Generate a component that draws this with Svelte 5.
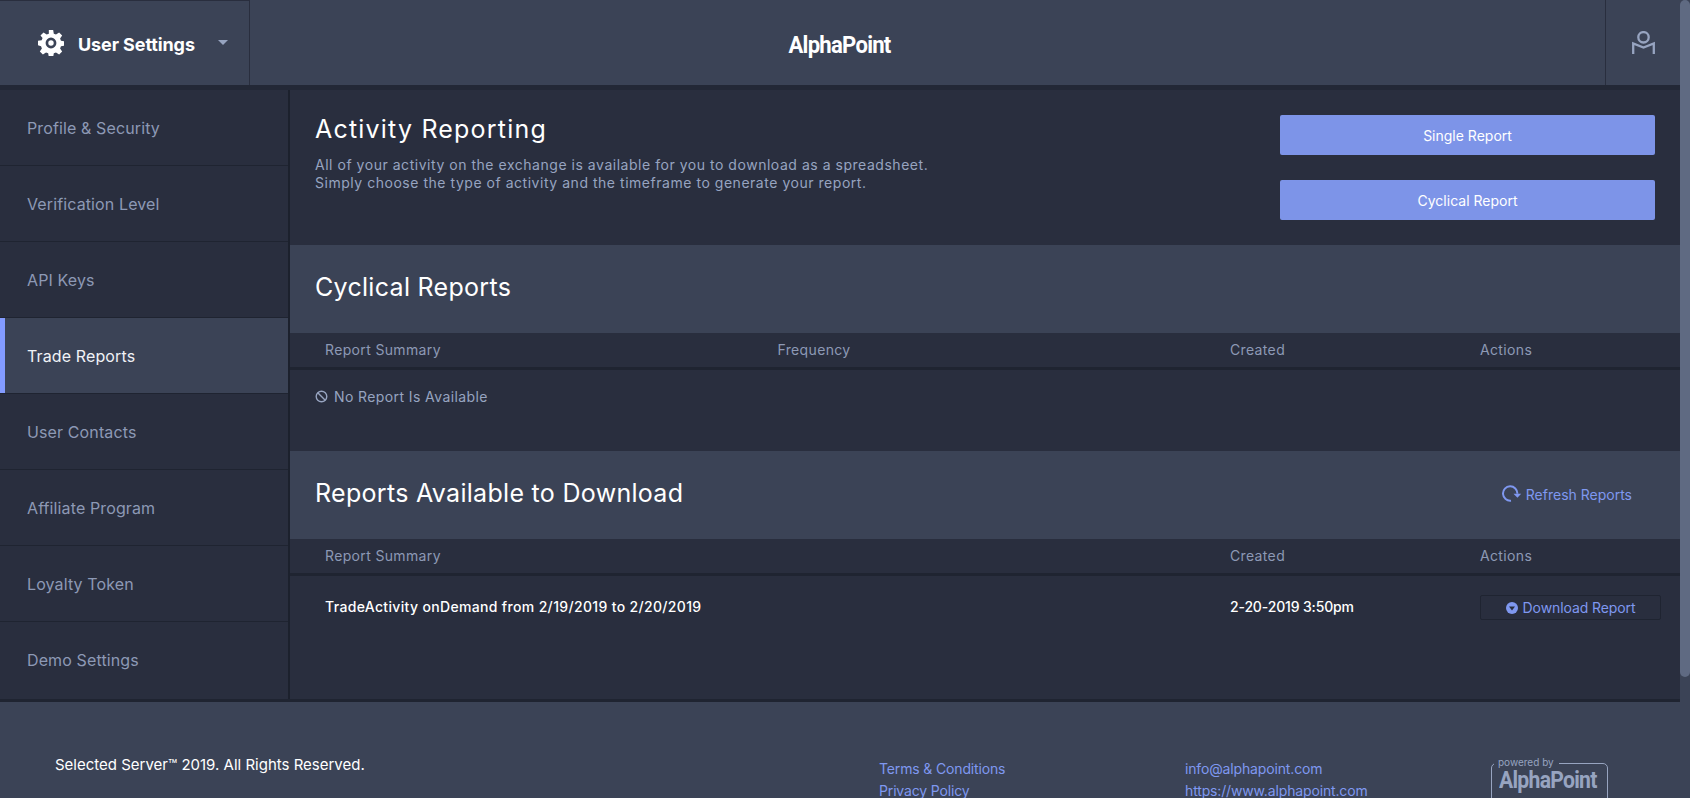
<script>
	const navItems = [
		'Profile & Security',
		'Verification Level',
		'API Keys',
		'Trade Reports',
		'User Contacts',
		'Affiliate Program',
		'Loyalty Token',
		'Demo Settings'
	];
	const activeItem = 'Trade Reports';
</script>

<div class="page">
	<header class="topbar">
		<div class="menu-toggle">
			<svg class="gear" viewBox="0 0 24 24" width="26" height="26">
				<path
					fill="#fff"
					fill-rule="evenodd"
					d="M10 0h4l.6 3.4 2 .8L19.500 2.300l2.800 2.800-1.900 2.800.8 2 3.400.6v3.900l-3.400.6-.8 2 1.900 2.800-2.800 2.800-2.900-1.900-2 .8-.6 3.400h-4l-.6-3.400-2-.8-2.900 1.900-2.800-2.800 1.900-2.800-.8-2L0 14V10l3.400-.6.800-2L2.300 5.100l2.800-2.800L8 4.200l2-.8zM12 7a5 5 0 1 0 0 10a5 5 0 0 0 0-10zM12 9.500a2.500 2.500 0 1 1 0 5a2.500 2.500 0 0 1 0-5z"
				/>
			</svg>
			<span class="menu-label">User Settings</span>
			<span class="caret"></span>
		</div>
		<div class="brand"><span class="logo">AlphaPoint</span></div>
		<div class="user-btn">
			<svg viewBox="0 0 23 23" width="23" height="23" fill="none" stroke="#97a4c0" stroke-width="2.300">
				<circle cx="11.500" cy="6.300" r="5.200" />
				<path d="M1.200 23V12.500l10.300 4 10.300-4V23" />
			</svg>
		</div>
	</header>

	<div class="body-row">
		<nav class="sidebar">
			{#each navItems as item}
				<div class="nav-item" class:active={item === activeItem}>{item}</div>
			{/each}
		</nav>

		<main class="content">
			<section class="intro">
				<div>
					<h1>Activity Reporting</h1>
					<p>All of your activity on the exchange is available for you to download as a spreadsheet.<br />Simply choose the type of activity and the timeframe to generate your report.</p>
				</div>
				<div class="intro-actions">
					<button class="primary">Single Report</button>
					<button class="primary">Cyclical Report</button>
				</div>
			</section>

			<section class="section-head">
				<h2>Cyclical Reports</h2>
			</section>
			<div class="table-head cyclical">
				<span>Report Summary</span>
				<span>Frequency</span>
				<span>Created</span>
				<span>Actions</span>
			</div>
			<div class="empty">
				<svg viewBox="0 0 14 14" width="13" height="13" fill="none" stroke="#97a4c0" stroke-width="1.500">
					<circle cx="7" cy="7" r="5.700" />
					<path d="M3 3l8 8" />
				</svg>
				No Report Is Available
			</div>

			<section class="section-head">
				<h2>Reports Available to Download</h2>
				<span class="refresh">
					<svg viewBox="0 0 20 18" width="20" height="18" fill="none" stroke="#7f98f0" stroke-width="2">
						<path d="M9 15.700A7.200 7.200 0 1 1 15.400 8.700" />
						<path fill="#7f98f0" stroke="none" d="M11.500 8.700h7.700l-3.800 4.100z" />
					</svg>
					Refresh Reports
				</span>
			</section>
			<div class="table-head available">
				<span>Report Summary</span>
				<span>Created</span>
				<span>Actions</span>
			</div>
			<div class="table-row available">
				<span>TradeActivity onDemand from 2/19/2019 to 2/20/2019</span>
				<span class="date">2-20-2019 3:50pm</span>
				<span>
					<button class="download">
						<svg viewBox="0 0 12 12" width="12" height="12">
							<circle cx="6" cy="6" r="6" fill="#7f98f0" />
							<path d="M3 4.500h6L6 8.500z" fill="#292e3e" />
						</svg>
						Download Report
					</button>
				</span>
			</div>
		</main>
	</div>

	<footer class="footer">
		<div class="copyright">Selected Server™ 2019. All Rights Reserved.</div>
		<div class="links">
			<span>Terms &amp; Conditions</span>
			<span>Privacy Policy</span>
		</div>
		<div class="links">
			<span>info@alphapoint.com</span>
			<span>https://www.alphapoint.com</span>
		</div>
		<div class="powered">
			<span class="powered-by">powered by</span>
			<span class="powered-logo">AlphaPoint</span>
		</div>
	</footer>

	<div class="scroll-thumb"></div>
</div>

<style>
	:global(html),
	:global(body) {
		margin: 0;
		height: 100%;
		overflow: hidden;
		background: #3b4356;
	}

	.page {
		position: relative;
		height: 798px;
		overflow: hidden;
		box-sizing: border-box;
		padding-right: 10px;
		background: #3b4356;
		font-family: Inter, "Liberation Sans", sans-serif;
		font-size: 14px;
		color: #fff;
	}

	.scroll-thumb {
		position: absolute;
		top: 0;
		right: 0;
		width: 10px;
		height: 677px;
		background: #5f6a82;
		border-radius: 5px;
	}

	.topbar {
		display: flex;
		height: 85px;
		background: #3b4356;
	}

	.menu-toggle {
		display: flex;
		align-items: center;
		width: 250px;
		flex-shrink: 0;
		box-sizing: border-box;
		padding-left: 38px;
		border-right: 1px solid #292e3e;
		border-top: 1px solid #292e3e;
	}

	.menu-label {
		margin: 2px 0 0 14px;
		font-size: 18px;
		font-weight: 700;
		letter-spacing: -0.1px;
	}

	.caret {
		margin: -2px 0 0 23px;
		border-left: 5px solid transparent;
		border-right: 5px solid transparent;
		border-top: 5px solid #97a4c0;
	}

	.brand {
		flex: 1;
		display: flex;
		align-items: center;
		justify-content: center;
	}

	.logo {
		display: inline-block;
		margin: 4px 176px 0 0;
		font-family: Roboto, sans-serif;
		font-size: 24px;
		font-weight: 700;
		letter-spacing: -0.8px;
		transform: scaleX(0.92);
	}

	.user-btn {
		width: 75px;
		flex-shrink: 0;
		display: flex;
		align-items: center;
		justify-content: center;
		border-left: 1px solid #292e3e;
		box-sizing: border-box;
	}

	.body-row {
		display: flex;
		border-top: 5px solid #232836;
		border-bottom: 3px solid #1f2431;
		background: #292e3e;
	}

	.sidebar {
		width: 288px;
		flex-shrink: 0;
		border-right: 2px solid #1c212d;
	}

	.nav-item {
		height: 75px;
		display: flex;
		align-items: center;
		padding-left: 27px;
		font-size: 16px;
		letter-spacing: 0.12px;
		color: #8d99b5;
		border-bottom: 1px solid #1f2431;
	}

	.nav-item:last-child {
		border-bottom: none;
		height: 76px;
	}

	.nav-item.active {
		color: #f0f2f6;
		background: #3b4356;
		box-shadow: inset 5px 0 0 #839bff;
	}

	.content {
		flex: 1;
		min-width: 0;
	}

	.intro {
		display: flex;
		justify-content: space-between;
		height: 155px;
		box-sizing: border-box;
		padding: 23px 25px 0;
	}

	h1,
	h2 {
		margin: 0;
		font-weight: 400;
		font-size: 25px;
		line-height: 32px;
	}

	h1 {
		letter-spacing: 1.2px;
	}

	h2 {
		letter-spacing: 0.3px;
	}

	.intro p {
		margin: 11px 0 0;
		font-size: 14px;
		line-height: 18px;
		letter-spacing: 0.53px;
		color: #97a4c0;
	}

	.intro-actions {
		display: flex;
		flex-direction: column;
		gap: 25px;
		margin-top: 2px;
	}

	.primary {
		width: 375px;
		height: 40px;
		border: none;
		border-radius: 2px;
		background: #7d94e8;
		color: #fff;
		font: inherit;
		font-size: 14px;
	}

	.section-head {
		display: flex;
		align-items: center;
		justify-content: space-between;
		height: 88px;
		padding: 0 25px;
		background: #3b4356;
	}

	.section-head h2 {
		margin-top: -4px;
	}

	.refresh {
		display: flex;
		align-items: center;
		gap: 4px;
		margin: -2px 23px 0 0;
		color: #7f98f0;
		font-size: 14px;
	}

	.table-head,
	.table-row {
		display: grid;
		padding-left: 35px;
		align-items: center;
	}

	.cyclical {
		grid-template-columns: 452.500px 452.500px 250px 1fr;
	}

	.available {
		grid-template-columns: 905px 250px 1fr;
	}

	.table-head {
		height: 32px;
		padding-bottom: 2px;
		color: #8d99b5;
		font-size: 14px;
		letter-spacing: 0.35px;
		border-bottom: 3px solid #1f2431;
		background: #292e3e;
	}

	.empty {
		height: 81px;
		box-sizing: border-box;
		display: flex;
		align-items: flex-start;
		gap: 6px;
		padding: 18px 25px 0;
		line-height: 17px;
		color: #97a4c0;
		letter-spacing: 0.4px;
	}

	.empty svg {
		margin-top: 2px;
	}

	.table-row {
		height: 123px;
		align-items: start;
		padding-top: 19px;
		box-sizing: border-box;
		font-weight: 500;
		line-height: 24px;
		letter-spacing: 0.34px;
	}

	.table-row .date {
		letter-spacing: -0.15px;
	}

	.download {
		display: flex;
		align-items: center;
		justify-content: center;
		gap: 5px;
		width: 181px;
		height: 25px;
		padding: 0;
		border: 1px solid #1f2431;
		border-radius: 2px;
		background: transparent;
		color: #7f98f0;
		font: inherit;
		font-weight: 400;
		font-size: 14px;
		letter-spacing: -0.1px;
	}

	.footer {
		display: grid;
		grid-template-columns: 824px 306px 306px 1fr;
		padding: 54px 0 0 55px;
		height: 96px;
	}

	.copyright {
		font-size: 15px;
		line-height: 18px;
	}

	.links {
		display: flex;
		flex-direction: column;
		gap: 5px;
		padding-top: 4px;
		color: #7f98f0;
		line-height: 17px;
		letter-spacing: -0.15px;
	}

	.powered {
		position: relative;
		width: 117px;
		height: 70px;
		box-sizing: border-box;
		margin-top: 7px;
		padding-left: 7px;
		border: 1px solid #97a4c0;
		border-radius: 5px;
		color: #97a4c0;
	}

	.powered-by {
		position: absolute;
		left: 2px;
		top: -8px;
		padding: 0 5px 0 4px;
		background: #3b4356;
		font-size: 10px;
		line-height: 12px;
	}

	.powered-logo {
		display: block;
		margin-top: 3px;
		font-family: Roboto, sans-serif;
		font-size: 23px;
		font-weight: 700;
		letter-spacing: -0.8px;
		transform: scaleX(0.92);
		transform-origin: left;
	}
</style>
